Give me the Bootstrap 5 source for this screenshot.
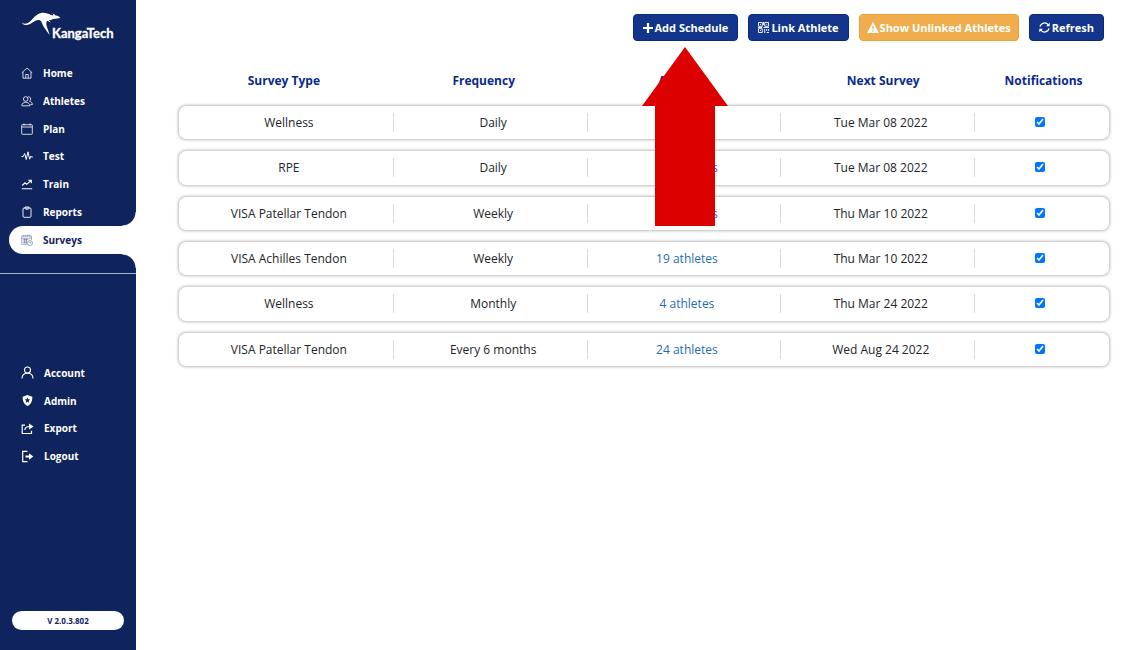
<!DOCTYPE html>
<html lang="en">
<head>
<meta charset="utf-8">
<meta name="viewport" content="width=device-width, initial-scale=1">
<title>KangaTech – Surveys</title>
<link href="https://cdn.jsdelivr.net/npm/bootstrap@5.3.0/dist/css/bootstrap.min.css" rel="stylesheet">
<style>
  :root { --navy: #0f245c; --royal: #13358b; --heading: #0a2a8c; }
  body { font-family: "Open Sans", "Noto Sans", sans-serif; font-size: 12px; color: #212529; background: #fff; }
  svg { display: block; flex: none; }

  /* Sidebar */
  .sidebar { width: 136px; background: var(--navy); }
  .brand { padding: 12px 0 0 21px; height: 59px; }
  .wordmark { font-family: Lato, sans-serif; font-size: 13px; font-weight: 700; fill: #fff; stroke: #fff; stroke-width: .3px; }
  .side-menu { display: grid; grid-auto-rows: 1fr; font-size: 10px; font-weight: 700; line-height: 16px; padding-left: 9px; }
  .menu-main { height: 195px; }
  .menu-user { height: 111px; margin-top: 85px; }
  .side-menu a { color: #fff; text-decoration: none; padding-left: 12px; gap: 10px; }
  .side-menu a.active { position: relative; background: #fff; color: var(--navy); border-radius: 14px 0 0 14px; }
  .side-menu a.active::before, .side-menu a.active::after { content: ""; position: absolute; right: 0; width: 14px; height: 14px; }
  .side-menu a.active::before { bottom: 100%; background: radial-gradient(circle at 0 0, transparent 13px, #fff 14px); }
  .side-menu a.active::after { top: 100%; background: radial-gradient(circle at 0 100%, transparent 13px, #fff 14px); }
  .divider { border-top: 1px solid #aab2cb; margin-top: 19px; }
  .version { margin: auto 12px 20px; background: #fff; color: var(--navy); font-size: 8px; font-weight: 700; line-height: 19px; }

  /* Toolbar */
  .toolbar { gap: 10px; padding: 14px 5px 0 0; }
  .btn-tool { --bs-btn-font-size: 11px; --bs-btn-font-weight: 700; --bs-btn-line-height: 17px; --bs-btn-padding-x: 9px; --bs-btn-padding-y: 4px; --bs-btn-border-radius: 4px; gap: 2px; }
  .btn-royal { --bs-btn-color: #fff; --bs-btn-bg: var(--royal); --bs-btn-border-color: #0a2a80; --bs-btn-hover-color: #fff; --bs-btn-hover-bg: #0a2a80; }
  .btn-amber { --bs-btn-color: #fff; --bs-btn-bg: #f0ad4e; --bs-btn-border-color: #eea236; --bs-btn-hover-color: #fff; --bs-btn-hover-bg: #ec971f; --bs-btn-padding-x: 7px; gap: 1px; }
  .pointer { position: absolute; top: 100%; left: 50%; margin-top: 6px; transform: translateX(-50%); z-index: 5; pointer-events: none; }

  /* Survey table */
  .content { padding: 0 31px 0 43px; min-width: 0; }
  .surveys, .surveys thead { display: block; }
  .surveys thead tr { display: grid; grid-template-columns: repeat(4, 200fr) 121fr; padding: 29px 5px 14px; }
  .surveys th { color: var(--heading); font-weight: 700; line-height: 20px; text-align: center; }
  .surveys tbody { display: grid; grid-auto-rows: 1fr; gap: 12px; min-height: 260px; }
  .surveys tbody tr { display: grid; grid-template-columns: 214fr 194fr 194fr 194fr 135fr; align-items: center; border-radius: 7px; box-shadow: 0 0 3px 1px #bbb; background: #fff; }
  .surveys td { line-height: 19px; text-align: center; padding: 0 0 0 6px; }
  .surveys td:last-child { padding: 0 4px 0 0; }
  .surveys td + td { border-left: 1px solid #dcdcdc; }
  .surveys td a { color: #1f6db5; text-decoration: none; }
  .surveys input { width: 10px; height: 10px; display: block; margin: 4px auto 5px; accent-color: #0075ff; }
</style>
</head>
<body>
<div class="d-flex min-vh-100">
  <aside class="sidebar d-flex flex-column flex-shrink-0">
    <div class="brand">
      <svg width="100" height="32" viewBox="0 0 100 32" role="img" aria-label="KangaTech">
        <path fill="#fff" d="M1 10.500C3 12.500 6 12 9 9.500 13 6 15 2 20 1c4-.6 7 .6 10 2l2.500.6-1-2.300 3.300 2.200c2 .2 3.700 1 4.500 2.500l-3 .6-4 .3c-1.500 1-3 1-4.300 1l2 2.800-3.500-2c-1 .5-1.500 2-1 5l3.300 9.300C24 17 22 14 20.500 10 19 7.500 17 7.500 14 9c-4 2.500-7 4.500-10 4C2.200 12.600 1.200 11.500 1 10.500z"/>
        <text class="wordmark" x="31" y="26">KangaTech</text>
      </svg>
    </div>
    <nav class="side-menu menu-main" aria-label="Main">
      <a class="d-flex align-items-center" href="#"><svg width="12" height="12" viewBox="0 0 12 12" fill="none" stroke="#fff" stroke-width=".8"><path d="M.8 5.800 6 1l5.200 4.800M2 5v6.200h8V5M4.700 11V7.500h2.600V11"/></svg>Home</a>
      <a class="d-flex align-items-center" href="#"><svg width="12" height="12" viewBox="0 0 12 12" fill="none" stroke="#fff" stroke-width=".8"><circle cx="4.700" cy="4" r="2.300"/><path d="M6.500 2.200c1.600-1 3.400.2 3.200 2-.1 1-.6 1.600-1.200 2 1.500.5 2.700 1.300 2.900 3.300H9.500M.8 10.800C.8 8.500 2.500 7.300 4.700 7.300s4 1.200 4.300 3.500z"/></svg>Athletes</a>
      <a class="d-flex align-items-center" href="#"><svg width="12" height="12" viewBox="0 0 12 12" fill="none" stroke="#fff" stroke-width=".8"><rect x=".7" y="1.700" width="10.600" height="9.600" rx=".6"/><path d="M.7 4h10.600M3 .5v2M9 .5v2"/></svg>Plan</a>
      <a class="d-flex align-items-center" href="#"><svg width="12" height="12" viewBox="0 0 12 12" fill="none" stroke="#fff" stroke-width="1" stroke-linejoin="round"><path d="M.5 6.500h1.700L3.700 3.500l1.500 6L7 1.800l1.600 7.400 1.200-3 .5.800h1.500"/></svg>Test</a>
      <a class="d-flex align-items-center" href="#"><svg width="12" height="12" viewBox="0 0 12 12" fill="none" stroke="#fff" stroke-width="1.100"><path d="M.8 10.800h10.400M1.200 7.500 4 4.800l1.700 1.500L10 2.500M7.300 2.200h3v3"/></svg>Train</a>
      <a class="d-flex align-items-center" href="#"><svg width="12" height="12" viewBox="0 0 12 12" fill="none" stroke="#fff" stroke-width=".9"><rect x="2" y="2" width="8" height="9.300" rx="1"/><path d="M4 2.200V1h4v1.200l-.8 1H4.800z"/></svg>Reports</a>
      <a class="d-flex align-items-center active" aria-current="page" href="#"><svg width="12" height="12" viewBox="0 0 12 12" fill="none" stroke="#4a5a88" stroke-width=".5"><path d="M6.300 10.300H.8V2h9.600v4M.8 4.200h9.600M2.700.7v2M4.700.7v2M6.700.7v2M8.700.7v2M2.300 5.500h5M2.300 7h4M2.300 8.600h3.500M3.400 4.500v5M5.500 4.500v5"/><circle cx="9" cy="9" r="2.500"/><path d="M9 7.500V9h1.300"/></svg>Surveys</a>
    </nav>
    <div class="divider"></div>
    <nav class="side-menu menu-user" aria-label="User">
      <a class="d-flex align-items-center" href="#"><svg width="13" height="13" viewBox="0 0 13 13" fill="none" stroke="#fff" stroke-width="1.100"><circle cx="6.500" cy="4" r="3"/><path d="M1 12.500C1 9 3.500 7.200 6.500 7.200S12 9 12 12.500"/></svg>Account</a>
      <a class="d-flex align-items-center" href="#"><svg width="13" height="13" viewBox="0 0 13 13"><path fill="#fff" d="m6.500 1 4.800 1.800c.2 4-.9 7.200-4.800 9.200C2.600 10 1.500 6.800 1.700 2.800z"/><path fill="#0f245c" d="m6.500 3.600.8 1.700 1.900.2-1.400 1.300.4 1.900-1.700-1-1.700 1 .4-1.900-1.400-1.300 1.900-.2z"/></svg>Admin</a>
      <a class="d-flex align-items-center" href="#"><svg width="13" height="13" viewBox="0 0 13 13" fill="none" stroke="#fff" stroke-width="1.200"><path d="M4 3.200H1.200v8.300h9.300V8.800M3.800 8C4 5.800 5.500 4.500 8.500 4.500"/><path fill="#fff" stroke="none" d="m8 1.500 4.500 3L8 7.500z"/></svg>Export</a>
      <a class="d-flex align-items-center" href="#"><svg width="13" height="13" viewBox="0 0 13 13" fill="none" stroke="#fff" stroke-width="1.200"><path d="M6.500 1.300H1.700v10.400h4.800"/><path stroke-width="2" d="M4.500 6.500h5"/><path fill="#fff" stroke="none" d="m8 3.300 4.300 3.200L8 9.700z"/></svg>Logout</a>
    </nav>
    <div class="version rounded-pill text-center">V 2.0.3.802</div>
  </aside>

  <main class="content flex-grow-1">
    <div class="toolbar d-flex justify-content-end">
      <div class="position-relative">
        <button type="button" class="btn btn-tool btn-royal d-flex align-items-center"><svg width="10" height="10" viewBox="0 0 10 10" stroke="#fff" stroke-width="2.200"><path d="M5 0v10M0 5h10"/></svg>Add Schedule</button>
        <svg class="pointer" width="86" height="179" viewBox="0 0 86 179" aria-hidden="true"><path fill="#d00" d="M43 0 86 59H73v120H13V59H0z"/></svg>
      </div>
      <button type="button" class="btn btn-tool btn-royal d-flex align-items-center"><svg width="11" height="11" viewBox="0 0 11 11" fill="none" stroke="#fff" stroke-width=".9"><path d="M.5.5h3.800v3.800H.5zM6.700.5h3.800v3.800H6.700zM.5 6.700h3.800v3.800H.5zM2 2.400h1M8.200 2.400h1M2 8.600h1M5.500 0v3M5.500 5.500H11M6.700 7v4M8.700 7v2M10.500 7v2M8.500 10.500H11M0 5.500h4"/></svg>Link Athlete</button>
      <button type="button" class="btn btn-tool btn-amber d-flex align-items-center"><svg width="12" height="11" viewBox="0 0 12 11"><path fill="#fff" d="m6 0 6 11H0z"/><path stroke="#f0ad4e" stroke-width="1.300" d="M6 3.800v3.400M6 8.200v1.300"/></svg>Show Unlinked Athletes</button>
      <button type="button" class="btn btn-tool btn-royal d-flex align-items-center"><svg width="11" height="11" viewBox="0 0 11 11" fill="none" stroke="#fff" stroke-width="1.200"><path d="M1 4.700C2 .8 7-.5 9.300 3M10 6.300C9 10.200 4 11.500 1.700 8"/><path fill="#fff" stroke="none" d="M10.700.7v3.600H7zM.3 10.300V6.700H4z"/></svg>Refresh</button>
    </div>

    <table class="surveys">
      <thead>
        <tr><th scope="col">Survey Type</th><th scope="col">Frequency</th><th scope="col">Athletes</th><th scope="col">Next Survey</th><th scope="col">Notifications</th></tr>
      </thead>
      <tbody>
        <tr><td>Wellness</td><td>Daily</td><td><a href="#">4 athletes</a></td><td>Tue Mar 08 2022</td><td><input type="checkbox" aria-label="Notify: Wellness, daily" checked></td></tr>
        <tr><td>RPE</td><td>Daily</td><td><a href="#">24 athletes</a></td><td>Tue Mar 08 2022</td><td><input type="checkbox" aria-label="Notify: RPE, daily" checked></td></tr>
        <tr><td>VISA Patellar Tendon</td><td>Weekly</td><td><a href="#">24 athletes</a></td><td>Thu Mar 10 2022</td><td><input type="checkbox" aria-label="Notify: VISA Patellar Tendon, weekly" checked></td></tr>
        <tr><td>VISA Achilles Tendon</td><td>Weekly</td><td><a href="#">19 athletes</a></td><td>Thu Mar 10 2022</td><td><input type="checkbox" aria-label="Notify: VISA Achilles Tendon, weekly" checked></td></tr>
        <tr><td>Wellness</td><td>Monthly</td><td><a href="#">4 athletes</a></td><td>Thu Mar 24 2022</td><td><input type="checkbox" aria-label="Notify: Wellness, monthly" checked></td></tr>
        <tr><td>VISA Patellar Tendon</td><td>Every 6 months</td><td><a href="#">24 athletes</a></td><td>Wed Aug 24 2022</td><td><input type="checkbox" aria-label="Notify: VISA Patellar Tendon, every 6 months" checked></td></tr>
      </tbody>
    </table>
  </main>
</div>
<script src="https://cdn.jsdelivr.net/npm/bootstrap@5.3.0/dist/js/bootstrap.bundle.min.js"></script>
</body>
</html>
